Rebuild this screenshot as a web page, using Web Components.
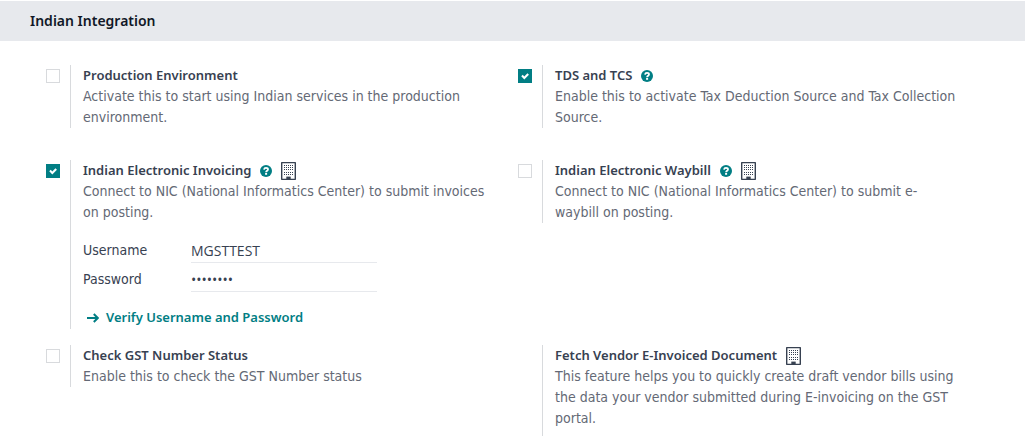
<!DOCTYPE html>
<html lang="en">
<head>
<meta charset="utf-8">
<meta name="viewport" content="width=device-width, initial-scale=1">
<title>Indian Integration</title>
<style>
  :root {
    --accent: #017e84;
    --heading: #111827;
    --strong: #374151;
    --muted: #646975;
    --rule: #d8dadd;
    --title-font: "Noto Sans", "Open Sans", sans-serif;
    --input-font: "Open Sans", "Noto Sans", sans-serif;
  }
  body {
    margin: 0;
    background: #fff;
    color: var(--strong);
    font: 14px/21px "DejaVu Sans Condensed", "Noto Sans", sans-serif;
  }
</style>
</head>
<body>
<settings-block heading="Indian Integration">
  <settings-row>
    <setting-box heading="Production Environment" toggle>Activate this to start using Indian services in the production environment.</setting-box>
    <setting-box heading="TDS and TCS" toggle checked help>Enable this to activate Tax Deduction Source and Tax Collection Source.</setting-box>
  </settings-row>
  <settings-row class="tight">
    <setting-box heading="Indian Electronic Invoicing" toggle checked help company>Connect to NIC (National Informatics Center) to submit invoices on posting.
      <setting-field slot="content" label="Username" value="MGSTTEST"></setting-field>
      <setting-field slot="content" label="Password" type="password" value="abcdefgh"></setting-field>
      <action-link slot="action">Verify Username and Password</action-link>
    </setting-box>
    <setting-box heading="Indian Electronic Waybill" toggle help company>Connect to NIC (National Informatics Center) to submit e-waybill on posting.</setting-box>
  </settings-row>
  <settings-row>
    <setting-box heading="Check GST Number Status" toggle>Enable this to check the GST Number status</setting-box>
    <setting-box class="roomy" heading="Fetch Vendor E-Invoiced Document" company>This feature helps you to quickly create draft vendor bills using the data your vendor submitted during E-invoicing on the GST portal.</setting-box>
  </settings-row>
</settings-block>

<script>
class SettingsBlock extends HTMLElement {
  connectedCallback() {
    this.attachShadow({ mode: 'open' }).innerHTML = `
      <style>
        :host { display: block; padding-top: 1px; }
        h2 { margin: 0; padding: 10px 30px; background: #e7e9ed; color: var(--heading); font: 600 14px/20px var(--title-font); }
        .rows { padding: 24px 35px 0 46px; }
      </style>
      <h2>${this.getAttribute('heading')}</h2>
      <div class="rows"><slot></slot></div>`;
  }
}

class SettingsRow extends HTMLElement {
  connectedCallback() {
    this.attachShadow({ mode: 'open' }).innerHTML = `
      <style>
        :host { display: grid; grid-template-columns: 1fr 1fr; align-items: start; margin-bottom: 32px; }
        :host(.tight) { margin-bottom: 16px; }
        :host(:last-child) { margin-bottom: 0; }
      </style>
      <slot></slot>`;
  }
}

class HelpIcon extends HTMLElement {
  connectedCallback() {
    this.attachShadow({ mode: 'open' }).innerHTML = `
      <style>:host { display: block; width: 12px; height: 12px; } svg { display: block; }</style>
      <svg width="12" height="12" viewBox="0 0 12 12" aria-hidden="true">
        <circle cx="6" cy="6" r="6" fill="#017e84"/>
        <path d="M4 4.6C4.2 3.3 5 2.9 6 2.9C7.2 2.9 8 3.5 8 4.4C8 5.8 6.1 5.7 6.1 7.2" fill="none" stroke="#fff" stroke-width="1.8"/>
        <path d="M5.1 8h2v1.8H5.1z" fill="#fff"/>
      </svg>`;
  }
}

class BuildingIcon extends HTMLElement {
  connectedCallback() {
    let windows = '';
    for (const y of [3, 5, 7, 10, 12]) {
      for (const x of [3, 5, 7, 9, 11]) windows += `M${x} ${y}h1v1h-1z`;
    }
    this.attachShadow({ mode: 'open' }).innerHTML = `
      <style>:host { display: block; width: 15px; height: 18px; } svg { display: block; }</style>
      <svg width="15" height="18" viewBox="0 0 15 18" aria-hidden="true" fill="#374151">
        <path fill-rule="evenodd" d="M.7 0h13.6q.7 0 .7.7v16.6q0 .7-.7.7H.7q-.7 0-.7-.7V.7Q0 0 .7 0zM1.4 1.3v15.4h12.2V1.3z"/>
        <path d="M5.3 14.6h4.4V17H5.3z"/>
        <path d="${windows}"/>
      </svg>`;
  }
}

class SettingBox extends HTMLElement {
  connectedCallback() {
    const has = name => this.hasAttribute(name);
    const title = this.getAttribute('heading');
    this.attachShadow({ mode: 'open' }).innerHTML = `
      <style>
        :host { display: flex; align-items: flex-start; }
        .toggle { flex: none; width: 24px; padding-top: 4px; display: grid; justify-items: start; }
        .toggle > * { grid-area: 1 / 1; }
        input { appearance: none; box-sizing: border-box; width: 14px; height: 14px; margin: 0; border: 1px solid var(--rule); background: #fff; }
        input:checked { background: var(--accent); border-color: var(--accent); }
        svg { width: 14px; height: 14px; pointer-events: none; visibility: hidden; }
        input:checked + svg { visibility: visible; }
        .pane { flex: 1; min-width: 0; border-left: 1px solid var(--rule); padding: 0 31px 0 12px; }
        :host(.roomy) .pane { padding-bottom: 7px; }
        .title { display: flex; align-items: center; gap: 9px; height: 21px; font: 600 13px/21px var(--title-font); }
        .text { color: var(--muted); }
        .fields { display: grid; gap: 6px; margin: 17px 0 15px; }
      </style>
      <div class="toggle">${has('toggle') ? `
        <input type="checkbox" id="toggle" ${has('checked') ? 'checked' : ''}>
        <svg viewBox="0 0 14 14" aria-hidden="true"><path d="M4 6.6l2.3 2.3L10.2 5" fill="none" stroke="#fff" stroke-width="2.1"/></svg>` : ''}
      </div>
      <div class="pane">
        <div class="title">
          ${has('toggle') ? `<label for="toggle">${title}</label>` : `<span>${title}</span>`}
          ${has('help') ? '<help-icon></help-icon>' : ''}
          ${has('company') ? '<building-icon></building-icon>' : ''}
        </div>
        <div class="text"><slot></slot></div>
        ${this.querySelector('[slot=content]') ? '<div class="fields"><slot name="content"></slot></div>' : ''}
        <slot name="action"></slot>
      </div>`;
  }
}

class SettingField extends HTMLElement {
  connectedCallback() {
    this.attachShadow({ mode: 'open' }).innerHTML = `
      <style>
        :host { display: grid; grid-template-columns: 108px minmax(0, 186px); align-items: start; }
        input { box-sizing: border-box; width: 100%; height: 23px; margin: 0; padding: 0 0 1px; border: 0; border-bottom: 1px solid #e7e9ed; outline: 0; background: none; color: inherit; font: 14px/21px var(--input-font); }
      </style>
      <label for="field">${this.getAttribute('label')}</label>
      <input id="field" type="${this.getAttribute('type') || 'text'}" value="${this.getAttribute('value')}" autocomplete="off">`;
  }
}

class ActionLink extends HTMLElement {
  connectedCallback() {
    this.attachShadow({ mode: 'open' }).innerHTML = `
      <style>
        :host { display: block; }
        button { display: flex; align-items: center; gap: 7px; margin: 0; padding: 0 0 1px 4px; border: 0; background: none; color: var(--accent); font: 600 13px/21px var(--title-font); cursor: pointer; }
      </style>
      <button type="button">
        <svg width="12" height="10" viewBox="0 0 12 10" aria-hidden="true"><path d="M0 5h11M6.8 1l4 4l-4 4" fill="none" stroke="currentColor" stroke-width="2"/></svg>
        <slot></slot>
      </button>`;
  }
}

customElements.define('help-icon', HelpIcon);
customElements.define('building-icon', BuildingIcon);
customElements.define('action-link', ActionLink);
customElements.define('setting-field', SettingField);
customElements.define('setting-box', SettingBox);
customElements.define('settings-row', SettingsRow);
customElements.define('settings-block', SettingsBlock);
</script>
</body>
</html>
